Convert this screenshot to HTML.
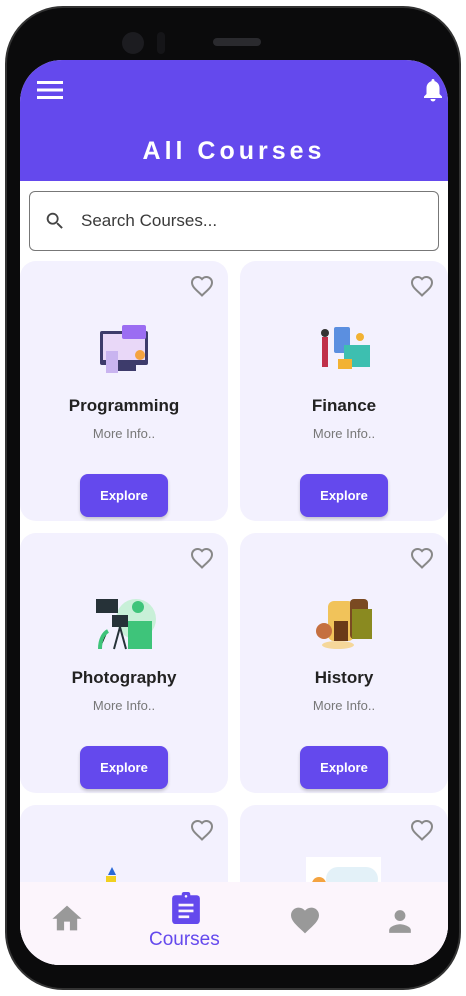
<!DOCTYPE html>
<html><head><meta charset="utf-8"><style>
*{margin:0;padding:0;box-sizing:border-box}
html,body{width:466px;height:996px;overflow:hidden}
body{background:#fff;position:relative;font-family:"Liberation Sans",Roboto,sans-serif}
.phone{position:absolute;left:5px;top:6px;width:456px;height:984px;background:#0b0b0c;border-radius:58px;border:2px solid #333}
.screen{position:absolute;left:20px;top:60px;width:428px;height:905px;background:#fff;border-radius:42px 42px 40px 40px;overflow:hidden}
.hdr{position:absolute;left:0;top:0;width:428px;height:121px;background:#6449ED}
.title{position:absolute;top:77px;width:100%;text-align:center;color:#fff;font-size:25px;font-weight:bold;letter-spacing:4px}
.search{position:absolute;left:9px;top:131px;width:410px;height:60px;border:1.5px solid #777;border-radius:6px}
.search span{position:absolute;left:51px;top:19px;font-size:17px;color:#3a3a3a}
.card{position:absolute;width:208px;height:260px;background:#f3f1fe;border-radius:16px}
.card h3{position:absolute;top:135px;width:100%;text-align:center;font-size:17px;color:#222}
.card p{position:absolute;top:165px;width:100%;text-align:center;font-size:13px;color:#777}
.btn{position:absolute;left:60px;top:213px;width:88px;height:43px;background:#6449ED;border-radius:8px;color:#fff;font-weight:bold;font-size:13px;text-align:center;line-height:43px;box-shadow:0 2px 3px rgba(0,0,0,.2)}
.heart{position:absolute;right:14px;top:14px}
.img{position:absolute;left:74px;top:58px;width:62px;height:60px}
.nav{position:absolute;left:0;top:822px;width:428px;height:83px;background:#fcf5fc}
</style></head><body>
<div class="phone">
<div style="position:absolute;left:115px;top:24px;width:22px;height:22px;border-radius:50%;background:#1c1c20"></div>
<div style="position:absolute;left:150px;top:24px;width:8px;height:22px;border-radius:4px;background:#151518"></div>
<div style="position:absolute;left:206px;top:30px;width:48px;height:8px;border-radius:4px;background:#2a2a2e"></div>
</div>
<div class="screen">
<div class="hdr">
<svg style="position:absolute;left:17px;top:20px" width="26" height="20"><rect y="1" width="26" height="3" fill="#fff"/><rect y="8.5" width="26" height="3" fill="#fff"/><rect y="16" width="26" height="3" fill="#fff"/></svg>
<svg style="position:absolute;left:403px;top:18px" width="20" height="24" viewBox="0 0 20 24"><path d="M10 1c1 0 1.5.7 1.5 1.5v.6C14.5 4 16.5 6.7 16.5 10v6l2.5 2.5V20H1v-1.5L3.5 16v-6c0-3.300 2-6 5-6.9v-.6C8.5 1.7 9 1 10 1z" fill="#fff"/><path d="M7.5 21h5a2.5 2.5 0 0 1-5 0z" fill="#fff"/></svg>
<div class="title">All Courses</div>
</div>
<div class="search">
<svg style="position:absolute;left:14px;top:18px" width="22" height="22" viewBox="0 0 24 24"><path d="M15.5 14h-.8l-.3-.3A6.5 6.5 0 1 0 9.5 16a6.5 6.5 0 0 0 4.2-1.6l.3.3v.8l5 5 1.500-1.5-5-5zm-6 0a4.5 4.5 0 1 1 0-9 4.5 4.5 0 0 1 0 9z" fill="#444"/></svg>
<span>Search Courses...</span></div>

<div class="card" style="left:0;top:201px">
<svg class="heart" width="24" height="22" viewBox="0 0 24 22"><path d="M12 20.5 10.5 19C5 14 2 11.3 2 7.5 2 4.5 4.4 2 7.5 2c1.7 0 3.4.8 4.5 2.1C13.1 2.8 14.8 2 16.5 2 19.6 2 22 4.5 22 7.5c0 3.8-3 6.5-8.5 11.5z" fill="none" stroke="#888" stroke-width="2"/></svg>
<svg class="img" viewBox="0 0 62 60"><rect x="6" y="12" width="48" height="34" rx="2" fill="#3d3b6b"/><rect x="9" y="15" width="42" height="26" fill="#e9d8f8"/><rect x="28" y="6" width="24" height="14" rx="2" fill="#9b6df2"/><circle cx="46" cy="36" r="5" fill="#f4a340"/><rect x="12" y="32" width="12" height="22" fill="#c9b4f0"/><rect x="24" y="46" width="18" height="6" fill="#3d3b6b"/></svg>
<h3>Programming</h3><p>More Info..</p><div class="btn">Explore</div></div>

<div class="card" style="left:220px;top:201px">
<svg class="heart" width="24" height="22" viewBox="0 0 24 22"><path d="M12 20.5 10.5 19C5 14 2 11.3 2 7.5 2 4.5 4.4 2 7.5 2c1.7 0 3.4.8 4.5 2.1C13.1 2.8 14.8 2 16.5 2 19.6 2 22 4.5 22 7.5c0 3.8-3 6.5-8.5 11.5z" fill="none" stroke="#888" stroke-width="2"/></svg>
<svg class="img" viewBox="0 0 62 60"><rect x="20" y="8" width="16" height="26" rx="2" fill="#5b8fe0"/><rect x="30" y="26" width="26" height="22" fill="#3dbfb0"/><rect x="24" y="40" width="14" height="10" fill="#f2b233"/><rect x="8" y="18" width="6" height="30" fill="#c0304a"/><circle cx="11" cy="14" r="4" fill="#333"/><circle cx="46" cy="18" r="4" fill="#f2b233"/></svg>
<h3>Finance</h3><p>More Info..</p><div class="btn">Explore</div></div>

<div class="card" style="left:0;top:473px">
<svg class="heart" width="24" height="22" viewBox="0 0 24 22"><path d="M12 20.5 10.5 19C5 14 2 11.3 2 7.5 2 4.5 4.4 2 7.5 2c1.7 0 3.4.8 4.5 2.1C13.1 2.8 14.8 2 16.5 2 19.6 2 22 4.5 22 7.5c0 3.8-3 6.5-8.5 11.5z" fill="none" stroke="#888" stroke-width="2"/></svg>
<svg class="img" viewBox="0 0 62 60"><circle cx="42" cy="28" r="20" fill="#c8f0d8"/><rect x="2" y="8" width="22" height="14" fill="#263238"/><rect x="34" y="30" width="24" height="28" fill="#3ec47a"/><circle cx="44" cy="16" r="6" fill="#3ec47a"/><rect x="18" y="24" width="16" height="12" fill="#263238"/><path d="M26 36l-6 22M26 36l6 22" stroke="#263238" stroke-width="2"/><path d="M6 58c0-10 4-16 8-18" stroke="#3ec47a" stroke-width="4"/></svg>
<h3>Photography</h3><p>More Info..</p><div class="btn">Explore</div></div>

<div class="card" style="left:220px;top:473px">
<svg class="heart" width="24" height="22" viewBox="0 0 24 22"><path d="M12 20.5 10.5 19C5 14 2 11.3 2 7.5 2 4.5 4.4 2 7.5 2c1.7 0 3.4.8 4.5 2.1C13.1 2.8 14.8 2 16.5 2 19.6 2 22 4.5 22 7.5c0 3.8-3 6.5-8.5 11.5z" fill="none" stroke="#888" stroke-width="2"/></svg>
<svg class="img" viewBox="0 0 62 60"><rect x="14" y="10" width="26" height="40" rx="6" fill="#f1c35a"/><rect x="36" y="8" width="18" height="40" rx="4" fill="#7a4a22"/><rect x="38" y="18" width="20" height="30" fill="#8a8a20"/><circle cx="10" cy="40" r="8" fill="#c57040"/><rect x="20" y="30" width="14" height="20" fill="#6a3a18"/><ellipse cx="24" cy="54" rx="16" ry="4" fill="#f5d79a"/></svg>
<h3>History</h3><p>More Info..</p><div class="btn">Explore</div></div>

<div class="card" style="left:0;top:745px">
<svg class="heart" width="24" height="22" viewBox="0 0 24 22"><path d="M12 20.5 10.5 19C5 14 2 11.3 2 7.5 2 4.5 4.4 2 7.5 2c1.7 0 3.4.8 4.5 2.1C13.1 2.8 14.8 2 16.5 2 19.6 2 22 4.5 22 7.5c0 3.8-3 6.5-8.5 11.5z" fill="none" stroke="#888" stroke-width="2"/></svg>
<svg style="position:absolute;left:84px;top:62px" width="16" height="16"><path d="M8 0l4 8H4z" fill="#2a6ad8"/><rect x="2" y="9" width="10" height="6" fill="#f1d020"/></svg>
</div>
<div class="card" style="left:220px;top:745px">
<svg class="heart" width="24" height="22" viewBox="0 0 24 22"><path d="M12 20.5 10.5 19C5 14 2 11.3 2 7.5 2 4.5 4.4 2 7.5 2c1.7 0 3.4.8 4.5 2.1C13.1 2.8 14.8 2 16.5 2 19.6 2 22 4.5 22 7.5c0 3.8-3 6.5-8.5 11.5z" fill="none" stroke="#888" stroke-width="2"/></svg>
<div style="position:absolute;left:66px;top:52px;width:75px;height:30px;background:#fff"><div style="position:absolute;left:20px;top:10px;width:52px;height:24px;border-radius:12px;background:#e3f1f8"></div><div style="position:absolute;left:6px;top:20px;width:14px;height:14px;border-radius:50%;background:#f4a340"></div></div>
</div>

<div class="nav">
<svg style="position:absolute;left:31px;top:22px" width="32" height="28" viewBox="1 2 22 19"><path d="M10 20v-6h4v6h5v-8h3L12 3 2 12h3v8z" fill="#999"/></svg>
<svg style="position:absolute;left:152px;top:10px" width="28" height="32" viewBox="0 0 26 30"><rect x="0" y="3" width="26" height="27" rx="3" fill="#6449ED"/><rect x="9" y="0" width="8" height="5" rx="2" fill="#6449ED"/><circle cx="13" cy="4" r="1.2" fill="#fcf5fc"/><rect x="6" y="11" width="14" height="2.5" fill="#fcf5fc"/><rect x="6" y="16.5" width="14" height="2.5" fill="#fcf5fc"/><rect x="6" y="22" width="10" height="2.5" fill="#fcf5fc"/></svg>
<div style="position:absolute;left:129px;top:47px;font-size:19px;color:#6449ED">Courses</div>
<svg style="position:absolute;left:269px;top:24px" width="32" height="28" viewBox="0 0 24 22"><path d="M12 21.5 10.5 20C5 15 1 11.5 1 7.3 1 3.9 3.6 1.3 7 1.3c1.9 0 3.7.9 5 2.3 1.3-1.4 3.1-2.3 5-2.3 3.4 0 6 2.6 6 6 0 4.2-4 7.7-9.5 12.7z" fill="#999"/></svg>
<svg style="position:absolute;left:367px;top:26px" width="26" height="26" viewBox="0 0 24 24"><circle cx="12" cy="7" r="5" fill="#999"/><path d="M2 23v-2.5C2 17 8.7 15 12 15s10 2 10 5.5V23z" fill="#999"/></svg>
</div>
</div>
</body></html>
